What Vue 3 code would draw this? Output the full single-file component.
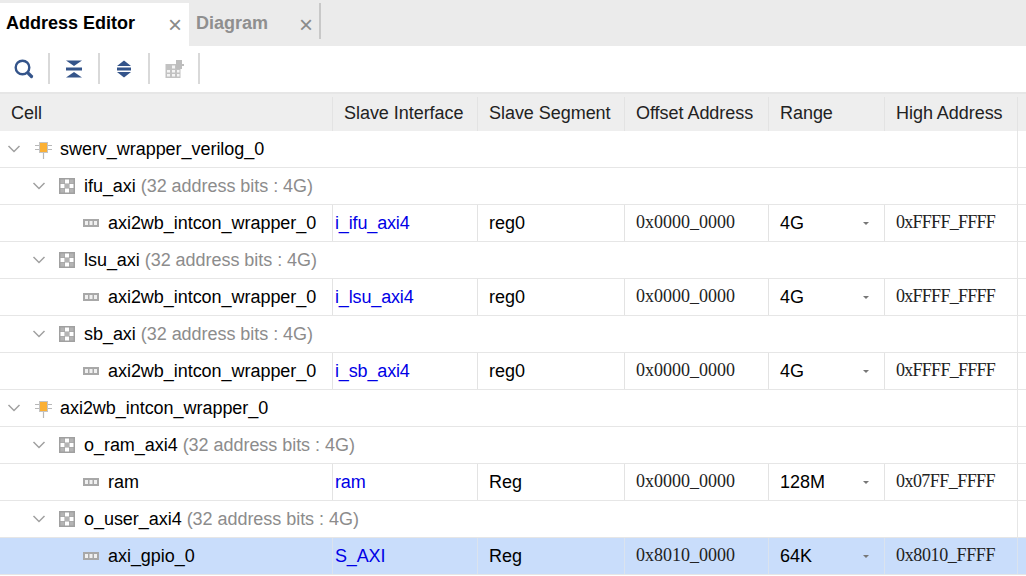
<template>
  <div class="editor">
    <div class="tabs">
      <div class="tab active">
        <span class="tab-name">Address Editor</span>
        <span class="tab-close">×</span>
      </div>
      <div class="tab">
        <span class="tab-name">Diagram</span>
        <span class="tab-close">×</span>
      </div>
    </div>

    <div class="toolbar">
      <button class="tool">
        <svg width="20" height="20" viewBox="0 0 20 20">
          <circle cx="8.500" cy="8.500" r="6.800" fill="none" stroke="#34548a" stroke-width="2.400" />
          <path d="M14.500 14.500L17.500 17.500" stroke="#34548a" stroke-width="3.200" stroke-linecap="round" />
        </svg>
      </button>
      <button class="tool">
        <svg width="20" height="20" viewBox="0 0 20 20">
          <path d="M2 1.500H18L10 7Z M2 18.500H18L10 13Z" fill="#34548a" />
          <rect x="2" y="8.500" width="16" height="3" fill="#34548a" />
        </svg>
      </button>
      <button class="tool">
        <svg width="20" height="20" viewBox="0 0 20 20">
          <path d="M3 7L10 1.500L17 7Z M3 13L10 18.500L17 13Z" fill="#34548a" />
          <rect x="3" y="8.500" width="14" height="3" fill="#34548a" />
        </svg>
      </button>
      <button class="tool">
        <svg width="20" height="20" viewBox="0 0 20 20">
          <rect x="1.500" y="5" width="15" height="14" fill="#c2c2c2" />
          <path d="M3 11H6V13.500H3ZM8 11H11V13.500H8ZM13 11H15.500V13.500H13ZM3 15H6V17.500H3ZM8 15H11V17.500H8ZM13 15H15.500V17.500H13ZM8 6.500H11V9.500H8Z" fill="#f4f4f4" />
          <path d="M12 1H18V5H20V7H18V10H12Z" fill="#bdbdbd" />
        </svg>
      </button>
    </div>

    <div class="row head">
      <div v-for="col in columns" :key="col" class="cell">{{ col }}</div>
    </div>

    <div
      v-for="row in rows"
      :key="row.id"
      class="row"
      :class="{ selected: row.selected, leaf: row.type === 'leaf' }"
    >
      <div class="cell name" :class="'level-' + row.type">
        <svg v-if="row.type !== 'leaf'" class="chevron" width="14" height="10" viewBox="0 0 14 10">
          <path d="M1.500 2L7 7.500L12.500 2" fill="none" stroke="#a0a0a0" stroke-width="1.500" />
        </svg>

        <svg v-if="row.type === 'cell'" class="icon" width="17" height="20" viewBox="0 0 17 20">
          <path d="M0 5.500H4M0 9.500H4M13 5.500H17M13 9.500H17M8.500 13V19" stroke="#b8b8b8" stroke-width="1.200" />
          <rect x="4.500" y="2.500" width="8" height="10" fill="#fbb034" stroke="#c4c4c4" />
        </svg>
        <svg v-else-if="row.type === 'group'" class="icon" width="16" height="16" viewBox="0 0 16 16">
          <rect width="16" height="16" fill="#a0a0a0" />
          <rect x="1.500" y="1.500" width="4" height="4" fill="#b4b4b4" />
          <rect x="6" y="1.500" width="4" height="4" fill="#fff" />
          <rect x="10.500" y="1.500" width="4" height="4" fill="#b4b4b4" />
          <rect x="1.500" y="6" width="4" height="4" fill="#fff" />
          <rect x="6" y="6" width="4" height="4" fill="#b4b4b4" />
          <rect x="10.500" y="6" width="4" height="4" fill="#fff" />
          <rect x="1.500" y="10.500" width="4" height="4" fill="#b4b4b4" />
          <rect x="6" y="10.500" width="4" height="4" fill="#fff" />
          <rect x="10.500" y="10.500" width="4" height="4" fill="#b4b4b4" />
        </svg>
        <svg v-else class="icon" width="16" height="8" viewBox="0 0 16 8">
          <rect width="16" height="8" fill="#a8a8a8" />
          <rect x="2" y="2" width="3" height="4" fill="#f0f0f0" />
          <rect x="6.500" y="2" width="3" height="4" fill="#f0f0f0" />
          <rect x="11" y="2" width="3" height="4" fill="#f0f0f0" />
        </svg>

        <span class="label">{{ row.name }}</span>
        <span v-if="row.bits" class="bits">({{ row.bits }})</span>
      </div>

      <template v-if="row.type === 'leaf'">
        <div class="cell iface">{{ row.iface }}</div>
        <div class="cell">{{ row.segment }}</div>
        <div class="cell addr">{{ row.offset }}</div>
        <div class="cell range">
          <span>{{ row.range }}</span>
          <span class="caret"></span>
        </div>
        <div class="cell addr" :style="{ letterSpacing: fSpacing(row.high) }">{{ row.high }}</div>
      </template>
    </div>
  </div>
</template>

<script setup>
const columns = ["Cell", "Slave Interface", "Slave Segment", "Offset Address", "Range", "High Address"];

const bits = "32 address bits : 4G";

// helper for the mapped segment rows
function leaf(name, iface, segment, offset, range, high, selected = false) {
  return { type: "leaf", name, iface, segment, offset, range, high, selected };
}

function fSpacing(value) {
  const count = value.split("F").length - 1;
  return (-count / value.length).toFixed(2) + "px";
}

const rows = [
  { type: "cell", name: "swerv_wrapper_verilog_0" },
  { type: "group", name: "ifu_axi", bits },
  leaf("axi2wb_intcon_wrapper_0", "i_ifu_axi4", "reg0", "0x0000_0000", "4G", "0xFFFF_FFFF"),
  { type: "group", name: "lsu_axi", bits },
  leaf("axi2wb_intcon_wrapper_0", "i_lsu_axi4", "reg0", "0x0000_0000", "4G", "0xFFFF_FFFF"),
  { type: "group", name: "sb_axi", bits },
  leaf("axi2wb_intcon_wrapper_0", "i_sb_axi4", "reg0", "0x0000_0000", "4G", "0xFFFF_FFFF"),
  { type: "cell", name: "axi2wb_intcon_wrapper_0" },
  { type: "group", name: "o_ram_axi4", bits },
  leaf("ram", "ram", "Reg", "0x0000_0000", "128M", "0x07FF_FFFF"),
  { type: "group", name: "o_user_axi4", bits },
  leaf("axi_gpio_0", "S_AXI", "Reg", "0x8010_0000", "64K", "0x8010_FFFF", true),
].map((r, i) => ({ ...r, id: i }));
</script>

<style>
html,
body {
  background: #fff;
  overflow: hidden;
}
</style>

<style scoped>
.editor {
  width: 1026px;
  height: 576px;
  overflow: hidden;
  background: #fff;
  font-family: "Liberation Sans", Arial, sans-serif;
  font-size: 18px;
  letter-spacing: -0.04px;
  color: #000;
}
.tabs {
  display: flex;
  height: 46px;
  box-sizing: border-box;
  padding-top: 3px;
  background: #ebebeb;
}
.tab {
  display: flex;
  width: 130px;
  height: 36px;
  position: relative;
  font-weight: bold;
  font-size: 18px;
  letter-spacing: 0;
  color: #8f8f8f;
  border-right: 2px solid #c8c8c8;
}
.tab.active {
  width: 189px;
  height: 43px;
  color: #000;
  background: #fff;
  border-right: 0;
}
.tab-name {
  margin: 10px 0 0 6px;
}
.tab:not(.active) .tab-name {
  margin-left: 7px;
}
.tab-close {
  position: absolute;
  right: 7px;
  top: 10px;
  font-weight: normal;
  font-size: 24px;
  line-height: 24px;
  color: #8a8a8a;
}
.tab:not(.active) .tab-close {
  right: 6px;
}
.toolbar {
  display: flex;
  height: 46px;
  box-sizing: border-box;
  padding-top: 7px;
  background: #fff;
}
.tool {
  display: flex;
  align-items: center;
  justify-content: center;
  width: 50px;
  height: 31px;
  padding: 0;
  background: none;
  border: 0;
  border-right: 2px solid #d9d9d9;
}
.row {
  display: grid;
  grid-template-columns: 333px 145px 147px 144px 116px 133px;
  height: 37px;
  box-sizing: border-box;
  border-bottom: 1px solid #e6e6e6;
  position: relative;
}
.row.head {
  height: 39px;
  padding-top: 3px;
  background: #eeeeee;
  border-top: 2px solid #e6e6e6;
  border-bottom: 0;
}
.row:not(.leaf):not(.head)::after {
  content: "";
  position: absolute;
  left: 1017px;
  top: 0;
  bottom: -1px;
  width: 1px;
  background: #e6e6e6;
}
.row.selected {
  background: #c9ddfb;
}
.cell {
  display: flex;
  align-items: center;
  box-sizing: border-box;
  padding-left: 11px;
  border-right: 1px solid #e3e3e3;
  white-space: nowrap;
}
.row:not(.leaf):not(.head) .cell {
  border-right: 0;
  grid-column: 1 / -1;
}
.row.selected .cell {
  border-right-color: #dbe3ee;
}
.head .cell {
  padding-bottom: 2px;
  color: #222;
}
.level-cell {
  padding-left: 7px;
}
.level-group {
  padding-left: 32px;
}
.level-leaf {
  padding-left: 83px;
}
.chevron {
  flex: none;
  margin-right: 13px;
}
.level-cell .chevron {
  margin-right: 14px;
}
.icon {
  flex: none;
  margin-right: 9px;
}
.level-cell .icon {
  margin-top: 1px;
  margin-right: 8px;
}
.bits {
  margin-left: 5px;
  color: #8c8c8c;
}
.iface {
  padding-left: 2px;
  letter-spacing: -0.15px;
  color: #0000e6;
}
.addr {
  font-family: "Liberation Serif", "Times New Roman", serif;
  font-size: 18px;
  letter-spacing: 0;
  color: #222;
  padding-bottom: 2px;
}
.range {
  justify-content: space-between;
  padding-right: 15px;
}
.caret {
  width: 0;
  height: 0;
  border-left: 3px solid transparent;
  border-right: 3px solid transparent;
  border-top: 3px solid #777;
}
</style>
